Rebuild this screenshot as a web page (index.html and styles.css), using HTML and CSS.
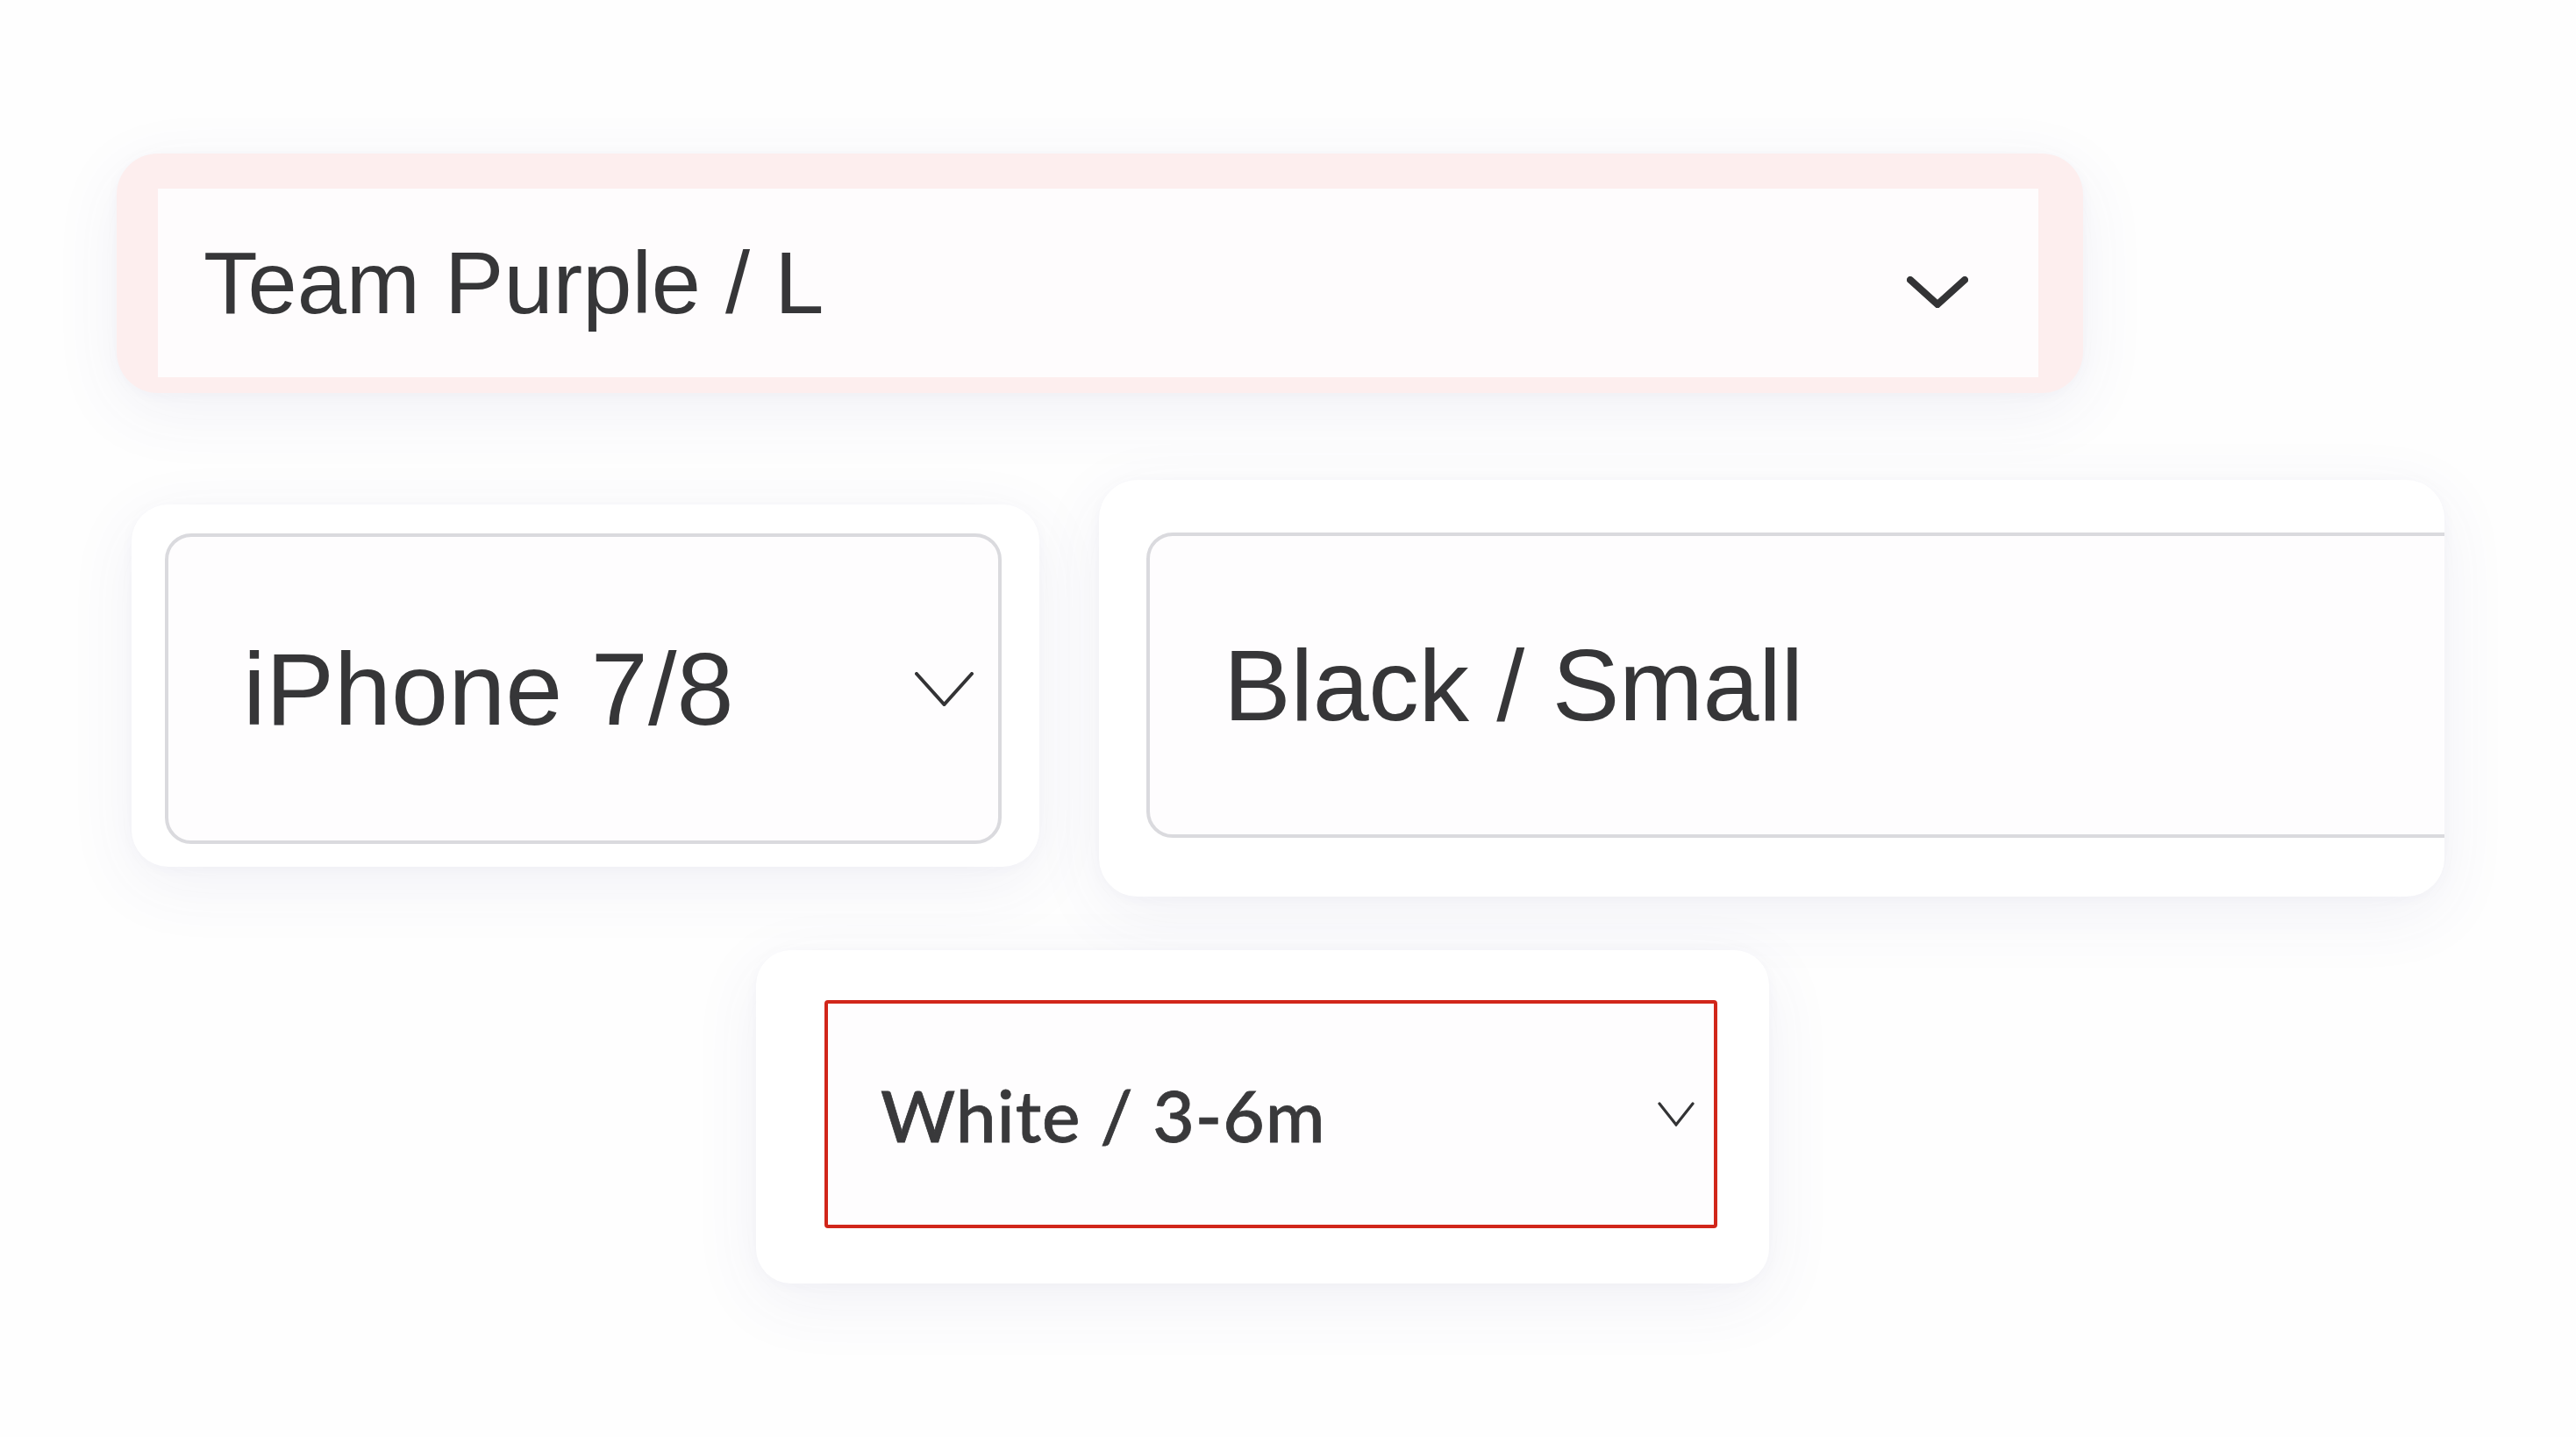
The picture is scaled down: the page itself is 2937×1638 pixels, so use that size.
FILE: index.html
```html
<!DOCTYPE html>
<html lang="en">
<head>
<meta charset="utf-8">
<title>Variant selects</title>
<link rel="stylesheet" href="styles.css">
</head>
<body>
<div class="canvas">
  <div class="row row-1">
    <div class="card card-pink">
      <div class="field field-plain">
        <span class="label label-helv label-lg">Team Purple / L</span>
        <svg class="chev chev-lg" viewBox="0 0 70 36" aria-hidden="true"><polyline points="4,4 35,32 66,4"/></svg>
      </div>
    </div>
  </div>
  <div class="row row-2">
    <div class="card card-phone">
      <div class="field field-grey field-phone">
        <span class="label label-helv label-phone">iPhone 7/8</span>
        <svg class="chev chev-md" viewBox="0 0 67 39" aria-hidden="true"><polyline points="2,2 33.5,37 65,2"/></svg>
      </div>
    </div>
    <div class="card card-black">
      <div class="field field-grey field-black">
        <span class="label label-helv label-black">Black / Small</span>
      </div>
    </div>
  </div>
  <div class="row row-3">
    <div class="card card-white">
      <div class="field field-red">
        <span class="label label-geo">White / 3-6m</span>
        <svg class="chev chev-sm" viewBox="0 0 42 28" aria-hidden="true"><polyline points="2,2 21,26 40,2"/></svg>
      </div>
    </div>
  </div>
</div>
</body>
</html>
```

FILE: styles.css
```css
html, body {
  margin: 0;
  padding: 0;
}
body {
  background: #fefefe;
  width: 2937px;
  height: 1638px;
  overflow: hidden;
  font-family: "Liberation Sans", Arial, sans-serif;
  color: #353537;
}
.canvas {
  display: flex;
  flex-direction: column;
  align-items: flex-start;
}
.row {
  display: flex;
  align-items: flex-start;
}
.card {
  box-sizing: border-box;
  background: #ffffff;
  box-shadow: 0 20px 80px rgba(70, 70, 140, 0.07), 0 2px 16px rgba(70, 70, 140, 0.03);
}
.field {
  box-sizing: border-box;
  display: flex;
  align-items: center;
  justify-content: space-between;
  background: #fefdfe;
}
.label {
  white-space: nowrap;
  color: #363638;
}
.label-helv {
  font-family: "Liberation Sans", Arial, sans-serif;
}
.label-lg {
  font-size: 101px;
  letter-spacing: 0;
}
.label-phone {
  font-size: 117px;
  letter-spacing: 0;
}
.label-black {
  font-size: 115px;
  letter-spacing: -0.3px;
}
.label-geo {
  font-family: Lato, "Noto Sans", sans-serif;
  font-size: 82px;
  font-weight: 500;
  letter-spacing: 1px;
  color: #39393b;
  -webkit-text-stroke: 0.8px #39393b;
}
.chev {
  flex: none;
  fill: none;
  stroke: #333335;
  stroke-linecap: round;
  stroke-linejoin: miter;
}
.chev-lg {
  width: 70px;
  height: 36px;
  stroke-width: 8;
  margin-top: 20px;
}
.chev-md {
  width: 67px;
  height: 39px;
  stroke-width: 4;
}
.chev-sm {
  width: 42px;
  height: 28px;
  stroke-width: 3.2;
}

/* Row 1 */
.row-1 {
  margin-top: 175px;
  margin-left: 133px;
}
.card-pink {
  width: 2242px;
  height: 273px;
  padding: 40px 51px 18px 47px;
  border-radius: 47px;
  background: #fdeeee;
}
.field-plain {
  width: 2144px;
  height: 215px;
  padding: 0 80px 0 52px;
  background: #fefcfd;
}

/* Row 2 */
.card-phone {
  margin-left: 150px;
  margin-top: 127px;
  width: 1035px;
  height: 413px;
  padding: 33px 43px 26px 38px;
  border-radius: 42px;
}
.field-grey {
  border: 4px solid #dadade;
  border-radius: 30px;
  background: #fefdfe;
}
.field-phone {
  width: 954px;
  height: 354px;
  padding: 0 28px 0 85px;
}
.card-black {
  margin-left: 68px;
  margin-top: 99px;
  width: 1534px;
  height: 475px;
  padding: 60px 0 0 54px;
  border-radius: 44px;
  overflow: hidden;
}
.field-black {
  width: 1700px;
  height: 348px;
  flex: none;
  padding: 0 0 0 84px;
}

/* Row 3 */
.row-3 {
  margin-left: 862px;
  margin-top: 61px;
}
.card-white {
  width: 1155px;
  height: 380px;
  padding: 57px 59px 63px 78px;
  border-radius: 40px;
}
.field-red {
  width: 1018px;
  height: 260px;
  padding: 0 22px 0 60px;
  border: 4px solid #d1261a;
  border-radius: 4px;
  background: #fefdfe;
}
```
